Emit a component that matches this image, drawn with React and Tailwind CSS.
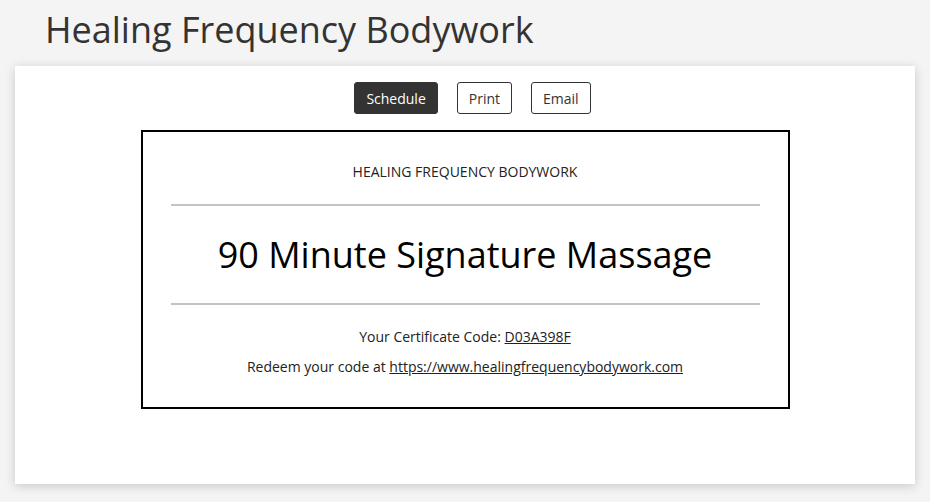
const App = () => {
  return (
    <div className="min-h-screen bg-[#f4f4f4] font-['Open_Sans',sans-serif] text-[#333]">
      <h1 className="pl-[45px] pt-[8px] text-[36px] leading-[43px] font-normal text-[#333]">
        Healing Frequency Bodywork
      </h1>

      <div className="mx-[15px] mt-[15px] h-[418px] bg-white pt-[16px] shadow-[0_2px_10px_rgba(0,0,0,0.18)]">
        <div className="flex justify-center gap-[19px] pl-[15px]">
          <button className="h-[32px] rounded-[3px] border border-[#333] bg-[#333] px-[11px] text-[14px] text-white">
            Schedule
          </button>
          <button className="h-[32px] rounded-[3px] border border-[#333] bg-white px-[11px] text-[14px] text-[#333]">
            Print
          </button>
          <button className="h-[32px] rounded-[3px] border border-[#333] bg-white px-[11px] text-[14px] text-[#333]">
            Email
          </button>
        </div>

        <div className="mx-auto mt-[16px] h-[279px] w-[649px] border-2 border-black px-7 pt-[30px] text-center text-black">
          <p className="text-[14px] leading-[20px] text-[#222]">HEALING FREQUENCY BODYWORK</p>
          <div className="mt-[22px] h-[2px] bg-[#c4c4c4]" />
          <h2 className="mt-[25px] text-[36px] leading-[48px] font-normal">
            90 Minute Signature Massage
          </h2>
          <div className="mt-[24px] h-[2px] bg-[#c4c4c4]" />
          <p className="mt-[22px] text-[14px] leading-[20px] text-[#222]">
            Your Certificate Code: <span className="underline">D03A398F</span>
          </p>
          <p className="mt-[10px] text-[14px] leading-[20px] text-[#222]">
            Redeem your code at{' '}
            <a href="#" className="text-[#222] underline">
              https://www.healingfrequencybodywork.com
            </a>
          </p>
        </div>
      </div>
    </div>
  );
};

export default App;
